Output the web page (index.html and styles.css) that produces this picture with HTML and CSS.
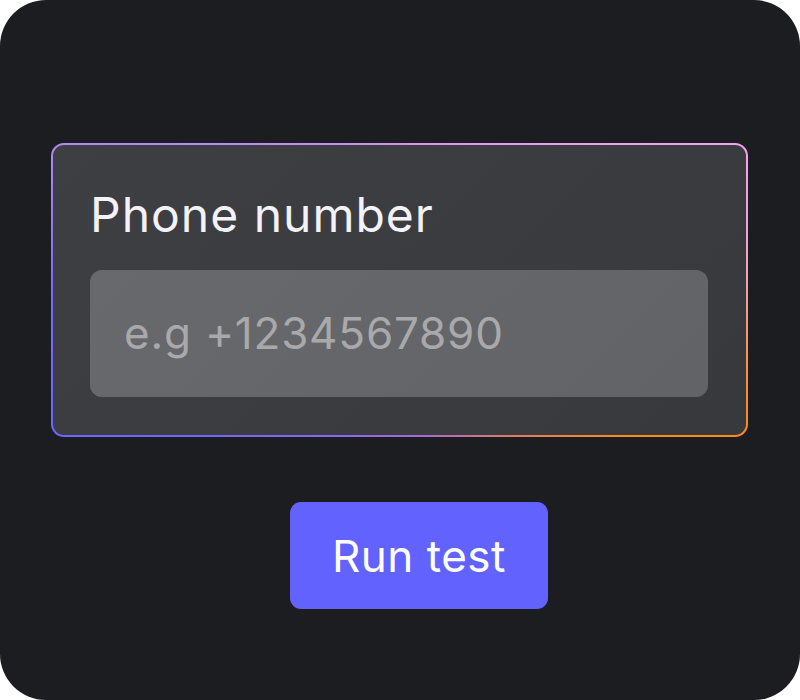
FILE: index.html
```html
<!DOCTYPE html>
<html>
<head>
<meta charset="utf-8">
<link rel="stylesheet" href="styles.css">
</head>
<body>
<div class="card">
  <div class="field-box">
    <label class="field-label" for="phone">Phone number</label>
    <div class="input" id="phone">e.g +1234567890</div>
  </div>
  <button class="run-btn">Run test</button>
</div>
</body>
</html>
```
FILE: styles.css
```css
html, body {
  margin: 0;
  padding: 0;
  background: #ffffff;
}
.card {
  width: 800px;
  height: 700px;
  box-sizing: border-box;
  background: #1c1d20;
  border-radius: 46px;
  padding: 143px 52px 0 51px;
  display: flex;
  flex-direction: column;
  align-items: flex-start;
}
.field-box {
  width: 697px;
  height: 294px;
  box-sizing: border-box;
  border: 2px solid transparent;
  border-radius: 13px;
  background:
    linear-gradient(135deg, #3e3f42, #38393c) padding-box,
    conic-gradient(from 0deg at 50% 50%,
      #d890f0 0deg,
      #f2a2f4 67deg,
      #f6a2c8 85deg,
      #ff8a1c 108deg,
      #ff8a1c 122deg,
      #a86ad0 170deg,
      #8c68f0 200deg,
      #6a66ff 247deg,
      #7a6aff 270deg,
      #b08af0 293deg,
      #d890f0 360deg) border-box;
  padding: 0 38px 38px 37px;
  display: flex;
  flex-direction: column;
}
.field-label {
  font-family: "Inter", sans-serif;
  font-size: 48px;
  color: #f2f2f8;
  height: 125px;
  line-height: 140px;
  padding-left: 0;
  letter-spacing: 1px;
}
.input {
  height: 127px;
  border-radius: 12px;
  background: linear-gradient(135deg, #68696c, #626366);
  color: #a9a9ab;
  font-family: "Inter", sans-serif;
  font-size: 44px;
  line-height: 127px;
  padding-left: 34px;
  letter-spacing: 0.8px;
}
.run-btn {
  margin-top: 65px;
  margin-left: 239px;
  width: 258px;
  height: 107px;
  border: none;
  border-radius: 11px;
  background: #6262ff;
  color: #ffffff;
  font-family: "Inter", sans-serif;
  font-size: 44px;
  letter-spacing: 0.5px;
  padding: 0;
}
```
